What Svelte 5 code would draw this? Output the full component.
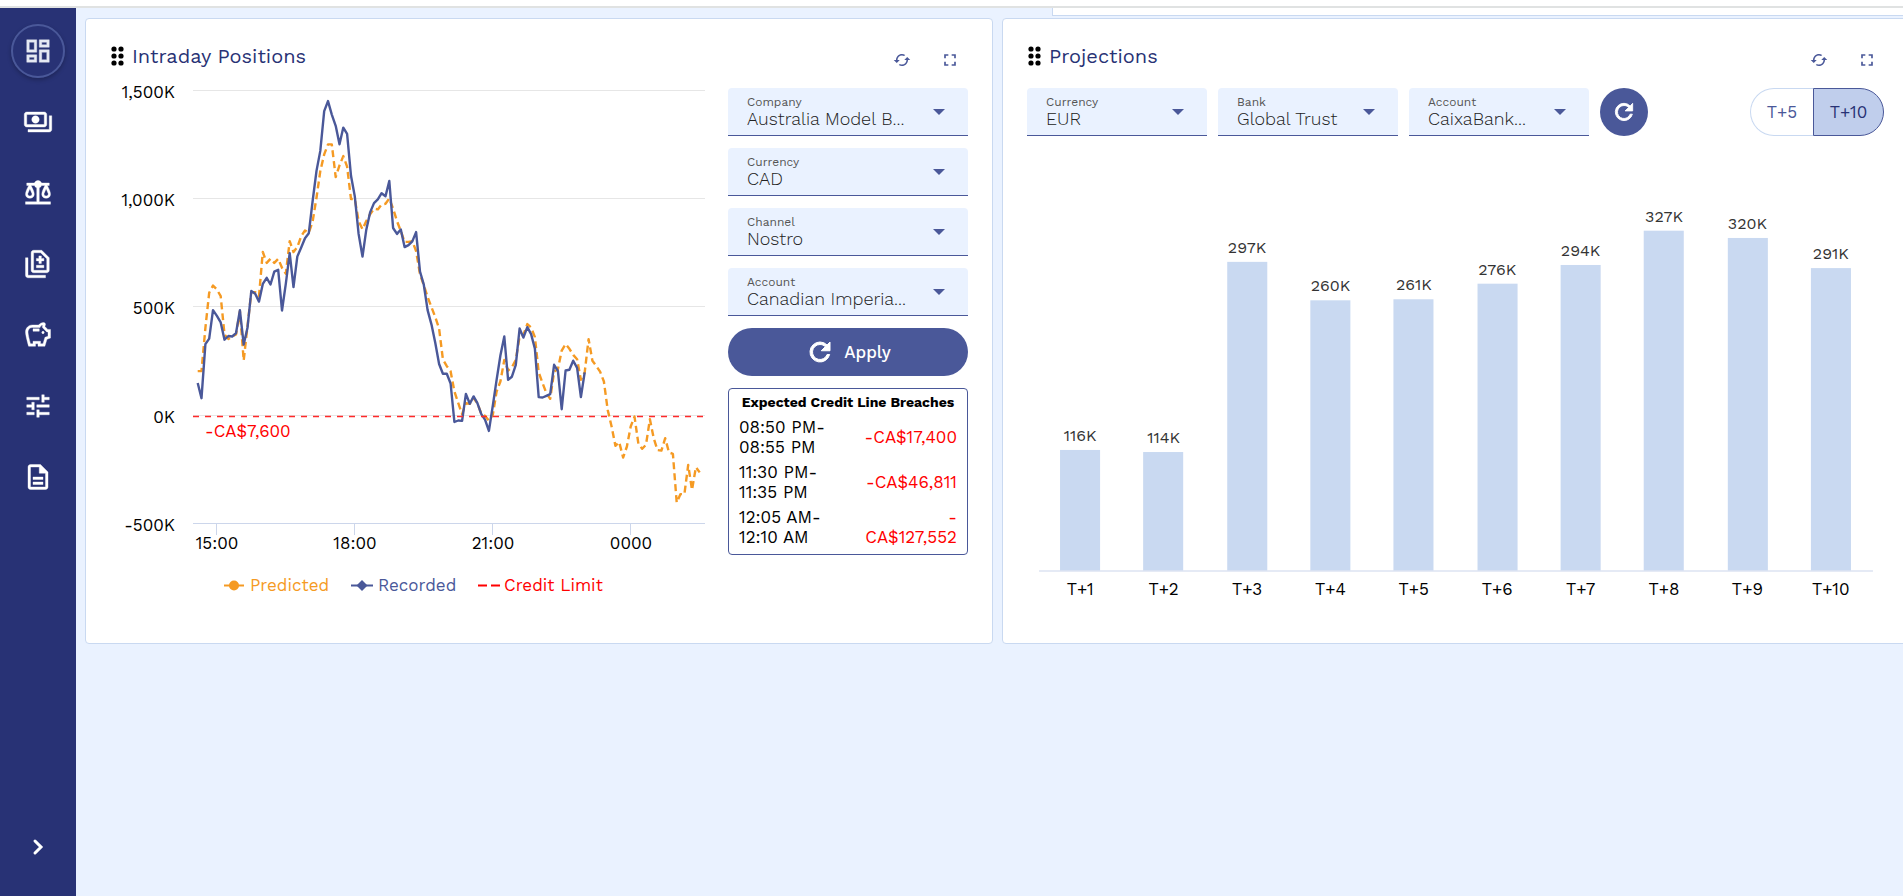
<script>
    const navItems = [
        { label: 'Dashboard', path: 'M19 5v2h-4V5h4M9 5v6H5V5h4m10 8v6h-4v-6h4M9 17v2H5v-2h4M21 3h-8v6h8V3zM11 3H3v10h8V3zm10 8h-8v10h8V11zm-10 4H3v6h8v-6z' },
        { label: 'Payments', path: 'M19 14V6c0-1.1-.9-2-2-2H3c-1.1 0-2 .9-2 2v8c0 1.1.9 2 2 2h14c1.1 0 2-.9 2-2zm-2 0H3V6h14v8zm-7-7c-1.66 0-3 1.34-3 3s1.34 3 3 3 3-1.34 3-3-1.34-3-3-3zm13 0v11c0 1.1-.9 2-2 2H4v-2h17V7h2z' },
        { label: 'Balances', path: 'M13 7.83c.85-.3 1.53-.98 1.83-1.83H17.6C16.4 8.2 15 11 15 13c0 1.9 1.57 3.2 3.5 3.2S22 14.9 22 13c0-2-1.4-4.8-2.6-7H21V4h-6.17c-.41-1.17-1.52-2-2.83-2s-2.42.83-2.83 2H3v2h1.6C3.4 8.2 2 11 2 13c0 1.9 1.57 3.2 3.5 3.2S9 14.9 9 13c0-2-1.4-4.8-2.6-7h2.77c.3.85.98 1.53 1.83 1.83V19H2v2h20v-2h-9V7.83zM20.2 12.6c0 1.1-.7 1.8-1.7 1.8s-1.7-.7-1.7-1.8l1.7-4.1 1.7 4.1zm-13 0c0 1.1-.7 1.8-1.7 1.8s-1.7-.7-1.7-1.8L5.5 8.5l1.7 4.1z' },
        { label: 'Statements', path: 'M18 23H4c-1.1 0-2-.9-2-2V7h2v14h14v2zM15 1H8.5c-1.1 0-2 .9-2 2v14c0 1.1.9 2 2 2H19c1.1 0 2-.9 2-2V7l-6-6zm4 16H8.5V3h5.67L19 7.83V17zM12.7 5.5h2v2h2v2h-2v2h-2v-2h-2v-2h2zM10.7 13h6v2h-6z' },
        { label: 'Savings', path: 'M15 10c0-.55.45-1 1-1s1 .45 1 1-.45 1-1 1-1-.45-1-1zM8 9h5V7H8v2zm14-1.5v6.97l-2.82.94L17.5 21H12v-2h-2v2H4.5S2 12.54 2 9.5C2 6.46 4.46 4 7.5 4h5c.91-1.21 2.36-2 4-2 .83 0 1.5.67 1.5 1.5 0 .21-.04.4-.12.58-.14.34-.26.73-.32 1.15l2.27 2.27H22zm-2 2h-1L15.5 6c0-.65.09-1.29.26-1.91-.97.25-1.76.97-2.09 1.91H7.5C5.57 6 4 7.57 4 9.5c0 1.88 1.22 6.65 2.01 9.5H8v-2h6v2h2.01l1.55-5.15 2.44-.82V9.5z' },
        { label: 'Settings', path: 'M3 17v2h6v-2H3zM3 5v2h10V5H3zm10 16v-2h8v-2h-8v-2h-2v6h2zM7 9v2H3v2h4v2h2V9H7zm14 4v-2H11v2h10zm-6-4h2V7h4V5h-4V3h-2v6z' },
        { label: 'Reports', path: 'M8 16h8v2H8zm0-4h8v2H8zm6-10H6c-1.1 0-2 .9-2 2v16c0 1.1.89 2 1.99 2H18c1.1 0 2-.9 2-2V8l-6-6zm4 18H6V4h7v5h5v11z' },
    ];

    const refreshPath = 'M17.65 6.35A7.96 7.96 0 0 0 12 4a8 8 0 1 0 7.73 10h-2.08A6 6 0 1 1 12 6c1.66 0 3.14.69 4.22 1.78L13 11h7V4l-2.35 2.35z';
    const cachedPath = 'M19 8l-4 4h3c0 3.31-2.69 6-6 6-1.01 0-1.97-.25-2.8-.7l-1.46 1.46C8.97 19.54 10.43 20 12 20c4.42 0 8-3.58 8-8h3l-4-4zM6 12c0-3.31 2.69-6 6-6 1.01 0 1.97.25 2.8.7l1.46-1.46C15.03 4.46 13.57 4 12 4c-4.42 0-8 3.58-8 8H1l4 4 4-4H6z';
    const fullscreenPath = 'M7 14H5v5h5v-2H7v-3zm-2-4h2V7h3V5H5v5zm12 7h-3v2h5v-5h-2v3zM14 5v2h3v3h2V5h-5z';

    const intradayFilters = [
        { id: 'company', label: 'Company', value: 'Australia Model B...' },
        { id: 'currency', label: 'Currency', value: 'CAD' },
        { id: 'channel', label: 'Channel', value: 'Nostro' },
        { id: 'account', label: 'Account', value: 'Canadian Imperia...' },
    ];

    const projectionFilters = [
        { id: 'p-currency', label: 'Currency', value: 'EUR' },
        { id: 'p-bank', label: 'Bank', value: 'Global Trust' },
        { id: 'p-account', label: 'Account', value: 'CaixaBank...' },
    ];

    const breaches = [
        { from: '08:50 PM-', to: '08:55 PM', amount: ['-CA$17,400'] },
        { from: '11:30 PM-', to: '11:35 PM', amount: ['-CA$46,811'] },
        { from: '12:05 AM-', to: '12:10 AM', amount: ['-', 'CA$127,552'] },
    ];

    // one value every five minutes, in thousands
    const recorded = [
        150, 80, 330, 355, 487, 460, 430, 350, 367, 365, 380, 487, 328, 405, 575, 562, 526, 608, 636, 605,
        664, 673, 485, 608, 750, 593, 734, 776, 819, 842, 993, 1130, 1222, 1406, 1452, 1390, 1338, 1253, 1330, 1301,
        1107, 1012, 839, 734, 858, 938, 981, 998, 1027, 1013, 1083, 866, 839, 859, 778, 787, 804, 847, 665, 604,
        487, 420, 335, 238, 193, 193, 148, -30, -23, -25, 100, 54, 88, 57, 6, -20, -71, 45, 165, 277,
        365, 165, 179, 234, 402, 360, 408, 376, 308, 85, 83, 91, 99, 234, 206, 29, 208, 211, 253, 220,
        85, 199,
    ];
    const predicted = [
        205, 205, 405, 567, 600, 582, 551, 374, 354, 366, 374, 482, 254, 413, 570, 570, 551, 755, 705, 724,
        705, 724, 682, 655, 805, 755, 778, 828, 855, 844, 898, 1006, 1129, 1206, 1252, 1252, 1101, 1155, 1198, 1149,
        1000, 1000, 898, 860, 898, 930, 955, 952, 975, 978, 1003, 955, 898, 852, 802, 802, 805, 760, 652, 602,
        548, 500, 454, 402, 259, 228, 204, 111, 57, 6, 57, 54, 80, 57, 8, -2, -23, 3, 111, 157,
        257, 208, 223, 257, 365, 373, 422, 406, 362, 199, 149, 103, 77, 203, 214, 300, 330, 308, 280, 260,
        165, 199, 353, 253, 229, 203, 157, 26, -51, -140, -123, -194, -143, -51, -5, -131, -154, -135, -17, -105,
        -160, -162, -105, -171, -177, -402, -363, -363, -228, -343, -239, -263,
    ];

    const yFor = (v) => 339.5 - v * 0.2165;
    const toPoints = (values) => values.map((v, i) => `${(87.7 + i * 3.832).toFixed(1)},${yFor(v).toFixed(1)}`).join(' ');

    const yTicks = [
        { value: 1500, label: '1,500K' },
        { value: 1000, label: '1,000K' },
        { value: 500, label: '500K' },
        { value: 0, label: '0K' },
        { value: -500, label: '-500K' },
    ];
    const xTicks = ['15:00', '18:00', '21:00', '0000'];

    const projections = [116, 114, 297, 260, 261, 276, 294, 327, 320, 291];
    const slot = 83.3;
    const barScale = 1.038;

    let horizon = 'T+10';
</script>

{#snippet icon(path, size)}
    <svg width={size} height={size} viewBox="0 0 24 24" fill="currentColor" aria-hidden="true"><path d={path} /></svg>
{/snippet}

{#snippet cardHeader(title)}
    <header class="card-header">
        <svg class="drag" width="15" height="20" viewBox="0 0 15 20" aria-hidden="true">
            {#each [3, 10, 17] as cy}
                <circle cx="4" {cy} r="2.6" />
                <circle cx="11" {cy} r="2.6" />
            {/each}
        </svg>
        <h2>{title}</h2>
        <button class="icon-btn" aria-label="Reload {title}">{@render icon(cachedPath, 18)}</button>
        <button class="icon-btn" aria-label="Expand {title}">{@render icon(fullscreenPath, 20)}</button>
    </header>
{/snippet}

{#snippet field(f)}
    <div class="field">
        <label for={f.id}>{f.label}</label>
        <select id={f.id}>
            <option>{f.value}</option>
        </select>
        <svg class="arrow" width="12" height="6" viewBox="0 0 12 6" aria-hidden="true"><path d="M0 0h12L6 6z" /></svg>
    </div>
{/snippet}

<div class="page">
    <div class="topbar"></div>
    <div class="shell">
        <nav>
            {#each navItems as item, i}
                <button class="nav-btn" class:active={i === 0} aria-label={item.label}>{@render icon(item.path, 30)}</button>
            {/each}
            <button class="nav-btn expand" aria-label="Expand menu">
                <svg width="30" height="30" viewBox="0 0 30 30" fill="none" stroke="currentColor" stroke-width="3" aria-hidden="true"><path d="M12 9l6 6-6 6" stroke-linecap="round" /></svg>
            </button>
        </nav>

        <main>
            <div class="previous-row"></div>
            <div class="cards">
                <section class="card">
                    {@render cardHeader('Intraday Positions')}
                    <div class="intraday">
                        <svg class="chart" viewBox="0 0 606 530" role="img" aria-label="Intraday positions chart">
                            {#each yTicks as tick}
                                <line x1="83" x2="595" y1={Math.round(yFor(tick.value)) - 0.5} y2={Math.round(yFor(tick.value)) - 0.5} class={tick.value === -500 ? 'axis' : 'grid'} />
                                <text x="65" y={Math.round(yFor(tick.value)) + 7} text-anchor="end">{tick.label}</text>
                            {/each}
                            {#each xTicks as label, i}
                                <line x1={106.5 + i * 138} x2={106.5 + i * 138} y1="448" y2="459" class="axis" />
                                <text x={107 + i * 138} y="473" text-anchor="middle">{label}</text>
                            {/each}
                            <polyline points={toPoints(predicted)} class="predicted" />
                            <polyline points={toPoints(recorded)} class="recorded" />
                            <line x1="83" x2="595" y1="340.5" y2="340.5" class="limit" />
                            <text x="95" y="361" class="red">-CA$7,600</text>

                            <path d="M114 509.5h20" stroke="#f59a23" stroke-width="2" />
                            <circle cx="124" cy="509.5" r="5" fill="#f59a23" />
                            <text x="140" y="515" fill="#f59a23">Predicted</text>
                            <path d="M241 509.5h22" stroke="#4a5899" stroke-width="2" />
                            <path d="M252 504l5.5 5.5-5.5 5.5-5.5-5.5z" fill="#4a5899" />
                            <text x="268" y="515" fill="#4a5899">Recorded</text>
                            <path d="M368 509.5h9m4 0h9" stroke="#f00" stroke-width="2" />
                            <text x="394" y="515" fill="#f00">Credit Limit</text>
                        </svg>

                        <div class="side">
                            {#each intradayFilters as f}
                                {@render field(f)}
                            {/each}
                            <button class="apply">{@render icon(refreshPath, 30)}Apply</button>
                            <table>
                                <caption>Expected Credit Line Breaches</caption>
                                <tbody>
                                    {#each breaches as b}
                                        <tr>
                                            <td>{b.from}<br />{b.to}</td>
                                            <td class="amount">
                                                {#each b.amount as part, i}{#if i}<br />{/if}{part}{/each}
                                            </td>
                                        </tr>
                                    {/each}
                                </tbody>
                            </table>
                        </div>
                    </div>
                </section>

                <section class="card">
                    {@render cardHeader('Projections')}
                    <div class="toolbar">
                        {#each projectionFilters as f}
                            {@render field(f)}
                        {/each}
                        <button class="round" aria-label="Refresh">{@render icon(refreshPath, 26)}</button>
                        <div class="toggle">
                            {#each ['T+5', 'T+10'] as h}
                                <button class:selected={horizon === h} aria-pressed={horizon === h} on:click={() => (horizon = h)}>{h}</button>
                            {/each}
                        </div>
                    </div>
                    <svg class="bars" viewBox="0 0 857 470" role="img" aria-label="Projections chart">
                        {#each projections as value, i}
                            <rect x={Math.round(11.5 + slot * (i + 0.5) - 20)} y={434 - value * barScale} width="40" height={value * barScale} />
                            <text x={11.5 + slot * (i + 0.5)} y={Math.round(425 - value * barScale)} text-anchor="middle" class="value">{value}K</text>
                            <text x={11.5 + slot * (i + 0.5)} y="458" text-anchor="middle">T+{i + 1}</text>
                        {/each}
                        <line x1="12" x2="845" y1="434.5" y2="434.5" class="axis" />
                    </svg>
                </section>
            </div>
        </main>
    </div>
</div>

<style>
    :global(body) {
        background: #eaf2ff;
    }
    .page {
        --navy: #283275;
        --indigo: #4a5899;
        --pale: #eaf2ff;
        --line: #c9d9f1;
        min-height: 100vh;
        display: flex;
        flex-direction: column;
        font-family: "Work Sans", Inter, "Open Sans", sans-serif;
        font-size: 17px;
        color: #000;
    }
    .topbar {
        height: 6px;
        background: #fff;
        border-bottom: 2px solid #e0e2e2;
    }
    .shell {
        flex: 1;
        display: flex;
    }
    button,
    select {
        font: inherit;
        color: inherit;
        border: 0;
        padding: 0;
        background: none;
        cursor: pointer;
    }
    svg {
        display: block;
    }

    nav {
        width: 76px;
        box-sizing: border-box;
        padding: 16px 1px 22px 0;
        display: flex;
        flex-direction: column;
        align-items: center;
        gap: 17px;
        background: var(--navy);
        color: #fff;
    }
    .nav-btn {
        width: 54px;
        height: 54px;
        box-sizing: border-box;
        display: grid;
        place-items: center;
        border-radius: 50%;
    }
    .nav-btn svg {
        stroke: currentColor;
        stroke-width: 0.3;
    }
    .nav-btn.active {
        border: 2px solid var(--indigo);
        color: #e6e9f3;
        box-shadow: 0 2px 4px rgba(0, 0, 0, 0.25);
    }
    .expand {
        margin-top: auto;
    }
    .nav-btn.expand svg {
        stroke-width: 3;
    }

    main {
        flex: 1;
        min-width: 0;
        overflow: hidden;
        padding-left: 9px;
    }
    .previous-row {
        height: 7px;
        margin: 0 0 2px 53.2%;
        background: #fff;
        border: 1px solid var(--line);
        border-width: 0 0 1px 1px;
    }
    /* the board runs slightly past the right edge of the window */
    .cards {
        display: grid;
        grid-template-columns: 1fr 1fr;
        gap: 9px;
        margin-right: -7px;
    }
    .card {
        min-width: 0;
        padding: 18px 24px 36px;
        background: #fff;
        border: 1px solid var(--line);
        border-radius: 4px;
    }
    .card-header {
        display: flex;
        align-items: center;
        height: 38px;
    }
    .drag {
        margin-right: 7px;
    }
    h2 {
        flex: 1;
        margin: 0;
        font-size: 20px;
        font-weight: 400;
        color: var(--navy);
    }
    .icon-btn {
        width: 48px;
        height: 30px;
        display: grid;
        place-items: center;
        align-self: flex-end;
        color: var(--indigo);
    }
    .icon-btn:last-child {
        margin-right: -6px;
    }

    .intraday {
        display: flex;
        align-items: flex-start;
        gap: 12px;
        margin-top: 1px;
    }
    .chart {
        flex: 1;
        min-width: 0;
    }
    .side {
        width: 240px;
        padding-top: 12px;
        display: flex;
        flex-direction: column;
        gap: 12px;
    }
    .field {
        position: relative;
        height: 48px;
        box-sizing: border-box;
        padding: 8px 0 0 19px;
        background: var(--pale);
        border-bottom: 1px solid var(--indigo);
        border-radius: 4px 4px 0 0;
        color: #222;
    }
    .field label {
        display: block;
        font-size: 12px;
        line-height: 13px;
        color: #555;
    }
    .field select {
        position: absolute;
        inset: 0;
        width: 100%;
        height: 100%;
        padding: 13px 40px 0 19px;
        appearance: none;
        font-size: 18px;
        font-weight: 300;
    }
    .arrow {
        position: absolute;
        right: 23px;
        top: 21px;
        fill: var(--indigo);
        pointer-events: none;
    }
    .apply {
        height: 48px;
        display: flex;
        align-items: center;
        justify-content: center;
        gap: 9px;
        border-radius: 24px;
        background: var(--indigo);
        color: #fff;
        font-weight: 500;
    }
    .apply svg,
    .round svg {
        stroke: currentColor;
        stroke-width: 0.8;
    }
    table {
        width: 100%;
        padding: 28px 8px 5px;
        border: 1px solid var(--indigo);
        border-radius: 4px;
        border-spacing: 0;
        line-height: 20px;
    }
    caption {
        margin-bottom: -24px;
        padding-top: 4px;
        font-size: 14px;
        font-weight: 700;
        white-space: nowrap;
    }
    td {
        padding: 0 2px 5px;
        white-space: nowrap;
    }
    tr:last-child td {
        padding-bottom: 2px;
    }
    .amount {
        text-align: right;
        color: #f00;
    }

    .toolbar {
        display: flex;
        gap: 11px;
        margin: 13px 1px 0 0;
    }
    .toolbar .field {
        width: 180px;
    }
    .round {
        width: 48px;
        height: 48px;
        display: grid;
        place-items: center;
        border-radius: 50%;
        background: var(--indigo);
        color: #fff;
    }
    .toggle {
        margin-left: auto;
        display: flex;
        color: var(--indigo);
    }
    .toggle button {
        width: 63px;
        border: 1px solid var(--line);
        border-radius: 24px 0 0 24px;
        border-right: 0;
    }
    .toggle button:last-child {
        width: 71px;
        border-radius: 0 24px 24px 0;
        border-right: 1px solid var(--line);
    }
    .toggle .selected,
    .toggle .selected:last-child {
        background: #c0ceec;
        border-color: var(--indigo);
        color: var(--navy);
    }
    .bars {
        width: 100%;
    }

    text {
        font-size: 17px;
    }
    .grid {
        stroke: #e6e6e6;
    }
    .axis {
        stroke: #ccd6eb;
    }
    .predicted,
    .recorded {
        fill: none;
        stroke-width: 2.4;
        stroke-linejoin: round;
    }
    .predicted {
        stroke: #f59a23;
        stroke-dasharray: 7 4;
    }
    .recorded {
        stroke: var(--indigo);
    }
    .limit {
        stroke: #ff2a2a;
        stroke-width: 1.5;
        stroke-dasharray: 6 6;
    }
    .red {
        fill: #f00;
    }
    .bars rect {
        fill: #c9d9f1;
    }
    .bars .value {
        font-size: 16px;
        fill: #333;
    }
</style>
